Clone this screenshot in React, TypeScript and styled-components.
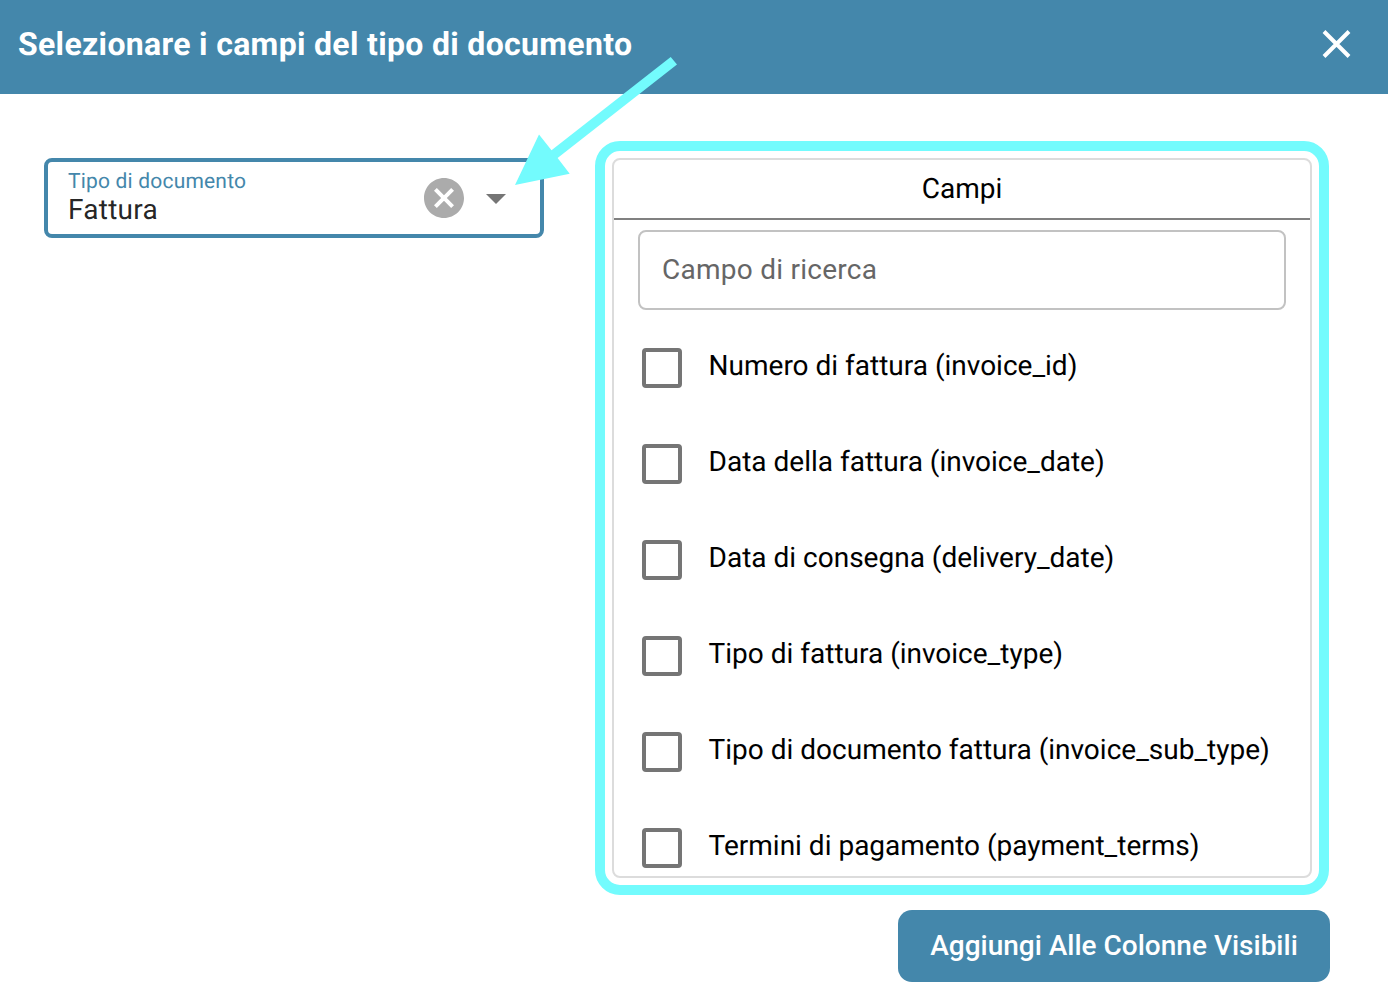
import React from "react";
import styled, { createGlobalStyle } from "styled-components";

const BLUE = "#4487ab";
const CYAN = "#73fbfd";

const GlobalStyle = createGlobalStyle`
  *, *::before, *::after { box-sizing: border-box; }
  body {
    margin: 0;
    background: #fff;
    font-family: Roboto, "Liberation Sans", sans-serif;
    text-rendering: geometricPrecision;
  }
`;

const Dialog = styled.div`
  position: relative;
  width: 1388px;
  height: 1008px;
  overflow: hidden;
  background: #fff;
  color: #000;
  font-size: 28px;
`;

const Header = styled.header`
  display: flex;
  align-items: center;
  justify-content: space-between;
  height: 94px;
  padding: 0 37px 6px 18px;
  background: ${BLUE};
  color: #fff;
`;

const Title = styled.h1`
  margin: 0;
  font-size: 32px;
  font-weight: 700;
  line-height: 40px;
  letter-spacing: 0.32px;
  white-space: nowrap;
`;

const IconButton = styled.button`
  display: flex;
  padding: 0;
  border: 0;
  background: none;
  color: inherit;
`;

const Body = styled.main`
  display: flex;
  justify-content: space-between;
  align-items: flex-start;
  padding: 47px 58px 0 44px;
`;

const Select = styled.div`
  display: flex;
  align-items: center;
  width: 500px;
  height: 80px;
  margin-top: 17px;
  padding: 0 34px 0 20px;
  border: 4px solid ${BLUE};
  border-radius: 8px;
`;

const SelectText = styled.div`
  display: flex;
  flex-direction: column;
  flex: 1;
  padding-bottom: 4px;
`;

const SelectLabel = styled.span`
  padding-top: 2px;
  color: ${BLUE};
  font-size: 21px;
  line-height: 26px;
  letter-spacing: 0.19px;
`;

const SelectValue = styled.span`
  color: rgba(0, 0, 0, 0.87);
  line-height: 30px;
  letter-spacing: 0.26px;
`;

const SelectIcons = styled.div`
  display: flex;
  align-items: center;
  gap: 22px;
`;

const Caret = styled.svg`
  margin-top: 2px;
`;

const Column = styled.div`
  display: flex;
  flex-direction: column;
  align-items: flex-end;
`;

const Highlight = styled.section`
  width: 734px;
  height: 754px;
  margin-right: 1px;
  padding: 7px;
  border: 10px solid ${CYAN};
  border-radius: 25px;
`;

const Panel = styled.div`
  height: 720px;
  overflow: hidden;
  border: 2px solid #dcdcdc;
  border-radius: 8px;
`;

const PanelTitle = styled.div`
  height: 60px;
  border-bottom: 2px solid #808080;
  line-height: 58px;
  text-align: center;
`;

const Search = styled.input`
  display: block;
  width: 648px;
  height: 80px;
  margin: 10px 24px 10px;
  padding: 0 22px 2px;
  border: 2px solid #c2c2c2;
  border-radius: 8px;
  outline: 0;
  font: inherit;
  letter-spacing: 0.26px;
  &::placeholder { color: #666; opacity: 1; }
`;

const List = styled.ul`
  margin: 0;
  padding: 0 0 0 28px;
  list-style: none;
`;

const Row = styled.li`
  display: flex;
  align-items: center;
  gap: 26.6px;
  height: 96px;
  white-space: nowrap;
`;

const Checkbox = styled.span`
  width: 40px;
  height: 40px;
  border: 4px solid #757575;
  border-radius: 4px;
`;

const RowLabel = styled.span`
  line-height: 40px;
  padding-bottom: 4px;
`;

const AddButton = styled.button`
  width: 432px;
  height: 72px;
  margin-top: 15px;
  padding: 0 0 2px;
  border: 0;
  border-radius: 14px;
  background: ${BLUE};
  color: #fff;
  font: inherit;
  font-weight: 500;
  white-space: nowrap;
`;

const Arrow = styled.svg`
  position: absolute;
  left: 510px;
  top: 50px;
  pointer-events: none;
`;

const fields = [
  "Numero di fattura (invoice_id)",
  "Data della fattura (invoice_date)",
  "Data di consegna (delivery_date)",
  "Tipo di fattura (invoice_type)",
  "Tipo di documento fattura (invoice_sub_type)",
  "Termini di pagamento (payment_terms)",
];

export default function App() {
  return (
    <>
      <GlobalStyle />
      <Dialog>
        <Header>
          <Title>Selezionare i campi del tipo di documento</Title>
          <IconButton aria-label="Chiudi">
            <svg width="29" height="28" viewBox="0 0 29 28" fill="none" stroke="currentColor" strokeWidth="4">
              <path d="M2 1.5 27 26.5M27 1.5 2 26.5" />
            </svg>
          </IconButton>
        </Header>
        <Body>
          <Select>
            <SelectText>
              <SelectLabel>Tipo di documento</SelectLabel>
              <SelectValue>Fattura</SelectValue>
            </SelectText>
            <SelectIcons>
              <svg width="40" height="40" viewBox="2 2 20 20" fill="#ababab">
                <path d="M12 2C6.47 2 2 6.47 2 12s4.47 10 10 10 10-4.47 10-10S17.53 2 12 2zm5 13.59L15.59 17 12 13.41 8.41 17 7 15.59 10.59 12 7 8.41 8.41 7 12 10.59 15.59 7 17 8.41 13.41 12 17 15.59z" />
              </svg>
              <Caret width="20" height="10" viewBox="0 0 20 10" fill="#757575">
                <path d="M0 0 10 10 20 0z" />
              </Caret>
            </SelectIcons>
          </Select>
          <Column>
            <Highlight>
              <Panel>
                <PanelTitle>Campi</PanelTitle>
                <Search placeholder="Campo di ricerca" />
                <List>
                  {fields.map((f) => (
                    <Row key={f}>
                      <Checkbox />
                      <RowLabel>{f}</RowLabel>
                    </Row>
                  ))}
                </List>
              </Panel>
            </Highlight>
            <AddButton>Aggiungi Alle Colonne Visibili</AddButton>
          </Column>
        </Body>
        <Arrow width="180" height="140" viewBox="510 50 180 140" fill={CYAN}>
          <path d="M515 185 539 134.5 551.5 150.2 670.7 57 677 64.6 557.6 158 569.7 173.7z" />
        </Arrow>
      </Dialog>
    </>
  );
}
